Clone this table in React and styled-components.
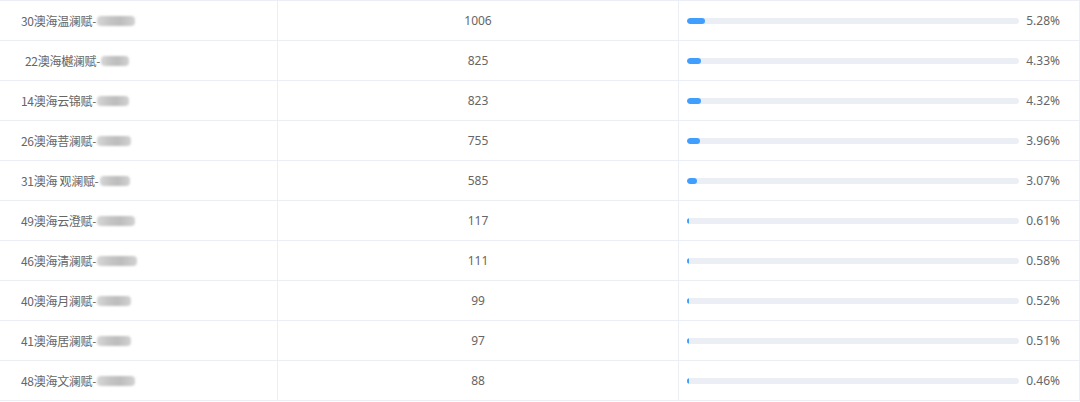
import React from 'react';
import styled, { createGlobalStyle } from 'styled-components';

const rows = [
    { code: '30', name: '澳海温澜赋-', count: 1006, pct: 5.28, blur: 38, indent: 0 },
    { code: '22', name: '澳海樾澜赋-', count: 825, pct: 4.33, blur: 28, indent: 4 },
    { code: '14', name: '澳海云锦赋-', count: 823, pct: 4.32, blur: 32, indent: 0 },
    { code: '26', name: '澳海菩澜赋-', count: 755, pct: 3.96, blur: 34, indent: 0 },
    { code: '31', name: '澳海 观澜赋-', count: 585, pct: 3.07, blur: 30, indent: 0 },
    { code: '49', name: '澳海云澄赋-', count: 117, pct: 0.61, blur: 38, indent: 0 },
    { code: '46', name: '澳海清澜赋-', count: 111, pct: 0.58, blur: 40, indent: 0 },
    { code: '40', name: '澳海月澜赋-', count: 99, pct: 0.52, blur: 34, indent: 0 },
    { code: '41', name: '澳海居澜赋-', count: 97, pct: 0.51, blur: 34, indent: 0 },
    { code: '48', name: '澳海文澜赋-', count: 88, pct: 0.46, blur: 38, indent: 0 },
];

const App = () => {
    return (
        <>
            <GlobalStyle />
            <Table>
                {rows.map((r) => (
                    <Row key={r.code}>
                        <NameCell>
                            <Name $indent={r.indent}>
                                {r.code}{r.name}
                                <Redacted $w={r.blur} />
                            </Name>
                        </NameCell>
                        <CountCell>{r.count}</CountCell>
                        <BarCell>
                            <Track>
                                <Fill style={{ width: `${r.pct}%` }} />
                            </Track>
                            <Percent>{r.pct.toFixed(2)}%</Percent>
                        </BarCell>
                    </Row>
                ))}
            </Table>
        </>
    );
};

const GlobalStyle = createGlobalStyle`
    body {
        margin: 0;
        background: #fff;
        font-family: "Microsoft YaHei", "Noto Sans", "Noto Sans CJK SC", sans-serif;
    }
`;

const Table = styled.div`
    width: 1079px;
    border-top: 1px solid #ebeef5;
    border-right: 1px solid #ebeef5;
`;

const Row = styled.div`
    display: grid;
    grid-template-columns: 278px 401px 1fr;
    height: 40px;
    border-bottom: 1px solid #ebeef5;
    box-sizing: border-box;
    font-size: 12px;
    color: #666;
`;

const Cell = styled.div`
    display: flex;
    align-items: center;
    border-right: 1px solid #ebeef5;
`;

const NameCell = styled(Cell)`
    padding-left: 21px;
`;

const Name = styled.span`
    display: flex;
    align-items: center;
    padding-left: ${(p) => p.$indent}px;
    font-family: "Noto Sans CJK SC", sans-serif;
    letter-spacing: -0.3px;
`;

const Redacted = styled.span`
    display: inline-block;
    width: ${(p) => p.$w}px;
    height: 10px;
    margin-left: 1px;
    border-radius: 4px;
    background: linear-gradient(90deg, #d6d6d6 0%, #c4c4c4 35%, #bdbdbd 60%, #d2d2d2 100%);
    filter: blur(1.2px);
`;

const CountCell = styled(Cell)`
    justify-content: center;
`;

const BarCell = styled(Cell)`
    border-right: none;
    padding: 0 19px 0 8px;
`;

const Track = styled.div`
    flex: 1;
    height: 6px;
    border-radius: 3px;
    background: #ebeef5;
    overflow: hidden;
`;

const Fill = styled.div`
    height: 100%;
    min-width: 2px;
    border-radius: 3px;
    background: #409eff;
`;

const Percent = styled.span`
    margin-left: 7px;
`;

export default App;
